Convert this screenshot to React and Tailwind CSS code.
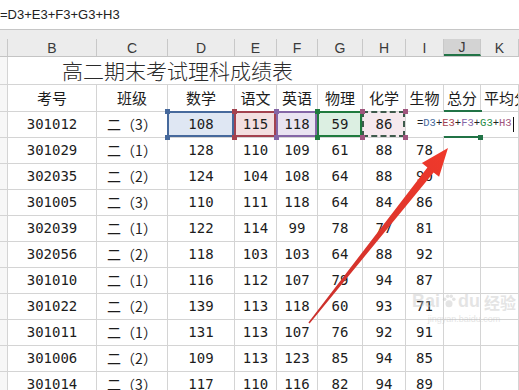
import React from 'react';

const COLS = 'grid grid-cols-[8px_89px_71px_67px_42px_41px_45px_43px_38px_37px_38px]';
const num = "font-['DejaVu_Sans_Mono',monospace] text-[14px] text-[#1c1c1c]";
const cjk = "font-['Noto_Sans_CJK_SC',sans-serif] text-[#1c1c1c]";
const line = 'border-r border-b border-[#d4d4d4]';

const letters = ['B', 'C', 'D', 'E', 'F', 'G', 'H', 'I', 'J', 'K'];
const heads = ['考号', '班级', '数学', '语文', '英语', '物理', '化学', '生物', '总分', '平均分'];

const rows = [
  ['301029', '二（1）', 128, 110, 109, 61, 88, 78],
  ['302035', '二（2）', 124, 104, 108, 64, 88, 90],
  ['301005', '二（3）', 110, 111, 118, 64, 84, 86],
  ['302039', '二（1）', 122, 114, 99, 78, 77, 81],
  ['302056', '二（2）', 118, 103, 103, 64, 88, 92],
  ['301010', '二（1）', 116, 112, 107, 79, 94, 87],
  ['301022', '二（2）', 139, 113, 118, 60, 93, 71],
  ['301011', '二（1）', 131, 113, 107, 76, 92, 91],
  ['301006', '二（2）', 109, 113, 123, 85, 94, 85],
  ['301014', '二（3）', 117, 110, 116, 82, 94, 89],
];

const Handles = ({ color }) => (
  <>
    <span className={`absolute -left-[3px] -top-[3px] w-[5px] h-[5px] z-20 ${color}`} />
    <span className={`absolute -right-[3px] -top-[3px] w-[5px] h-[5px] z-20 ${color}`} />
    <span className={`absolute -left-[3px] -bottom-[3px] w-[5px] h-[5px] z-20 ${color}`} />
    <span className={`absolute -right-[3px] -bottom-[3px] w-[5px] h-[5px] z-20 ${color}`} />
  </>
);

const SelCell = ({ value, fill, border, handle }) => (
  <div className={`relative h-[26px] flex items-center justify-center ${line} ${fill}`}>
    <div className={`absolute -left-px -top-px right-0 bottom-0 border-2 z-10 ${border}`} />
    <Handles color={handle} />
    <span className={`relative z-10 ${num}`}>{value}</span>
  </div>
);

export default function App() {
  return (
    <div className="relative w-[519px] h-[390px] overflow-hidden bg-white">
      {/* formula bar */}
      <div className="h-[30px] flex items-center border-b border-[#c6c6c6] font-['Liberation_Sans',sans-serif] text-[13px] text-[#222]">
        =D3+E3+F3+G3+H3
      </div>
      <div className="h-[9px] bg-[#ececec]" />

      {/* column letters */}
      <div className={`${COLS} h-[18px] bg-[#ececec] border-b border-[#c4c4c4]`}>
        <div className="border-r border-[#c8c8c8]" />
        {letters.map((l) => (
          <div
            key={l}
            className={`flex items-center justify-center leading-none border-r border-[#c8c8c8] font-['Liberation_Sans',sans-serif] text-[14px] text-[#3a3a3a] ${
              l === 'J' ? 'bg-[#d3d3d3] border-b-2 border-b-[#217346]' : ''
            }`}
          >
            {l}
          </div>
        ))}
      </div>

      {/* title row */}
      <div className="flex h-[28px] border-b border-[#d4d4d4]">
        <div className="w-[8px] border-r border-[#d4d4d4] bg-[#f7f7f7]" />
        <div className={`flex-1 flex items-center pl-[54px] text-[21px] leading-none font-light ${cjk} text-[#2a2a2a]`}>
          高二期末考试理科成绩表
        </div>
      </div>

      {/* header row */}
      <div className={`${COLS} h-[27px]`}>
        <div className={`${line} bg-[#f7f7f7]`} />
        {heads.map((h, i) => (
          <div
            key={h}
            className={`flex items-center overflow-hidden whitespace-nowrap text-[15px] ${cjk} ${line} ${
              i === 9 ? 'justify-start pl-[3px]' : 'justify-center'
            }`}
          >
            {h}
          </div>
        ))}
      </div>

      {/* row 3 (editing) */}
      <div className={`${COLS} h-[26px]`}>
        <div className={`${line} bg-[#f7f7f7]`} />
        <div className={`flex items-center justify-center ${line} ${num}`}>301012</div>
        <div className={`flex items-center justify-center ${line} text-[14px] ${cjk}`}>二（3）</div>
        <SelCell value={108} fill="bg-[#dfe7f3]" border="border-[#46699c]" handle="bg-[#46699c]" />
        <SelCell value={115} fill="bg-[#f3dfe0]" border="border-[#a3424f]" handle="bg-[#a3424f]" />
        <SelCell value={118} fill="bg-[#e9e3f1]" border="border-[#8466a6]" handle="bg-[#8466a6]" />
        <SelCell value={59} fill="bg-[#dcefe2]" border="border-[#1f7a3e]" handle="bg-[#1f7a3e]" />
        <SelCell value={86} fill="bg-[#f6e9ee]" border="border-dashed border-[#3f5a4c]" handle="bg-[#a0557e]" />
        <div className={`${line}`} />
        <div className={`relative ${line}`}>
          <span className="absolute left-0 -top-[2px] w-[38px] h-[2px] bg-[#217346] z-10" />
          <span className="absolute left-0 -bottom-px w-[38px] h-[2px] bg-[#217346] z-10" />
          <span className="absolute -right-[3px] -bottom-[3px] w-[5px] h-[5px] bg-[#217346] z-20" />
          <div className="absolute -left-[28px] top-0 h-[24px] flex items-center whitespace-nowrap bg-white pl-px pr-[2px] z-10 font-['Liberation_Mono',monospace] text-[10.5px]">
            <span className="text-[#222]">=</span>
            <span className="text-[#46699c]">D3</span>
            <span className="text-[#222]">+</span>
            <span className="text-[#a3424f]">E3</span>
            <span className="text-[#222]">+</span>
            <span className="text-[#8466a6]">F3</span>
            <span className="text-[#222]">+</span>
            <span className="text-[#1f8a45]">G3</span>
            <span className="text-[#222]">+</span>
            <span className="text-[#a0557e]">H3</span>
            <span className="ml-px w-px h-[15px] bg-[#111]" />
          </div>
        </div>
        <div className={`${line}`} />
      </div>

      {/* data rows */}
      {rows.map((r) => (
        <div key={r[0]} className={`${COLS} h-[26px]`}>
          <div className={`${line} bg-[#f7f7f7]`} />
          <div className={`flex items-center justify-center ${line} ${num}`}>{r[0]}</div>
          <div className={`flex items-center justify-center ${line} text-[14px] ${cjk}`}>{r[1]}</div>
          {r.slice(2).map((v, i) => (
            <div key={i} className={`flex items-center justify-center ${line} ${num}`}>
              {v}
            </div>
          ))}
          <div className={line} />
          <div className={line} />
        </div>
      ))}

      {/* red arrow */}
      <svg className="absolute left-0 top-0 pointer-events-none" width="519" height="390" viewBox="0 0 519 390">
        <defs>
          <linearGradient id="ar" x1="0" y1="1" x2="1" y2="0">
            <stop offset="0" stopColor="#c9302c" />
            <stop offset="1" stopColor="#f0392b" />
          </linearGradient>
        </defs>
        <polygon
          points="308.4,322.5 427.4,167.4 421.9,163 448,148 439.1,176.8 433.6,172.4 309.6,323.5"
          fill="url(#ar)"
        />
      </svg>

      {/* watermark */}
      <div className="absolute left-[412px] top-[292px] pointer-events-none opacity-40 flex flex-col items-center whitespace-nowrap">
        <div className="flex items-end gap-[2px] whitespace-nowrap font-['Liberation_Sans',sans-serif] font-bold text-[18px] leading-none text-[#bdbdbd]">
          <span>Bai</span>
          <svg width="14" height="14" viewBox="0 0 16 16" className="mb-[2px] shrink-0">
            <circle cx="8" cy="11" r="4" fill="#bdbdbd" />
            <circle cx="3" cy="6" r="2" fill="#bdbdbd" />
            <circle cx="6.5" cy="2.5" r="2" fill="#bdbdbd" />
            <circle cx="10.5" cy="2.5" r="2" fill="#bdbdbd" />
            <circle cx="13.5" cy="6" r="2" fill="#bdbdbd" />
          </svg>
          <span>du</span>
          <span className="ml-[2px] font-['Noto_Sans_CJK_SC',sans-serif] text-[16px]">经验</span>
        </div>
        <div className="font-['Liberation_Sans',sans-serif] text-[9px] text-[#bdbdbd] mt-[3px]">jingyan.baidu.com</div>
      </div>
    </div>
  );
}
